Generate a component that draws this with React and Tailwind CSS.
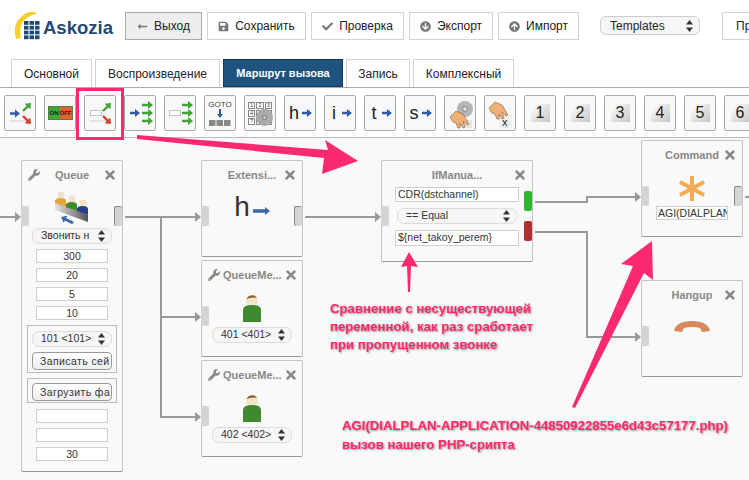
import { FaLongArrowAltLeft, FaSave, FaCheck, FaArrowCircleDown, FaArrowCircleUp, FaWrench, FaTimes } from "react-icons/fa";

const headerButtons = [
  { label: "Выход", icon: FaLongArrowAltLeft, w: "w-[77px]", active: true },
  { label: "Сохранить", icon: FaSave, w: "w-[99px]" },
  { label: "Проверка", icon: FaCheck, w: "w-[93px]" },
  { label: "Экспорт", icon: FaArrowCircleDown, w: "w-[84px]" },
  { label: "Импорт", icon: FaArrowCircleUp, w: "w-[81px]" },
];

const tabs = [
  { label: "Основной", w: "w-[81px]" },
  { label: "Воспроизведение", w: "w-[125px]" },
  { label: "Маршрут вызова", w: "w-[120px]", active: true },
  { label: "Запись", w: "w-[64px]" },
  { label: "Комплексный", w: "w-[101px]" },
];

const BLUE = "#2f5aa0";
const GREEN = "#3fa535";
const RED = "#d0402c";

function Arr({ x1, y1, x2, y2, color = BLUE, t = 2.4, head = 4 }) {
  const len = Math.hypot(x2 - x1, y2 - y1);
  const deg = (Math.atan2(y2 - y1, x2 - x1) * 180) / Math.PI;
  const b = len - head - 1;
  return (
    <polygon
      transform={`translate(${x1} ${y1}) rotate(${deg})`}
      points={`0,${-t / 2} ${b},${-t / 2} ${b},${-head} ${len},0 ${b},${head} ${b},${t / 2} 0,${t / 2}`}
      fill={color}
    />
  );
}

function Sort({ color = "#333" }) {
  return (
    <svg width="7" height="12" viewBox="0 0 7 12" className="shrink-0">
      <polygon points="3.5,0 7,4.5 0,4.5" fill={color} />
      <polygon points="3.5,12 7,7.5 0,7.5" fill={color} />
    </svg>
  );
}

function ToolIcon({ children }) {
  return (
    <svg width="30" height="34" viewBox="0 0 30 34" className="block">
      {children}
    </svg>
  );
}

const Smear = () => <rect x="5" y="24" width="16" height="2" fill="#e4e4e4" />;

function SplitIcon({ box }) {
  return (
    <ToolIcon>
      <Smear />
      {box ? (
        <rect x="5.5" y="14.5" width="11" height="5" fill="#fff" stroke="#c4c4c4" />
      ) : (
        <Arr x1={5} y1={17.5} x2={15} y2={17.5} />
      )}
      <Arr x1={18} y1={15} x2={26} y2={7} color={GREEN} />
      <Arr x1={18} y1={20} x2={26} y2={28} color={RED} />
    </ToolIcon>
  );
}

function TripleIcon({ box }) {
  return (
    <ToolIcon>
      {box ? (
        <rect x="4.5" y="14.5" width="11" height="5" fill="#fff" stroke="#c4c4c4" />
      ) : (
        <Arr x1={5} y1={17} x2={15} y2={17} />
      )}
      <Arr x1={17} y1={9} x2={28} y2={9} color={GREEN} />
      <Arr x1={17} y1={17} x2={28} y2={17} color={GREEN} />
      <Arr x1={17} y1={25} x2={28} y2={25} color={GREEN} />
    </ToolIcon>
  );
}

function OnOffIcon() {
  return (
    <div className="flex h-[14px] w-[25px] border border-[#5a7a50] text-[6px] leading-[12px] font-bold text-[#222]">
      <span className="flex-1 bg-[#3fa535] text-center">ON</span>
      <span className="flex-1 bg-[#e8622c] text-center">OFF</span>
    </div>
  );
}

function GotoIcon() {
  return (
    <div className="flex flex-col items-center">
      <span className="text-[8px] leading-[9px] text-[#444]">GOTO</span>
      <svg width="22" height="18" viewBox="0 0 22 18">
        <Arr x1={11} y1={0} x2={11} y2={9} t={2} head={3} />
        <rect x="0" y="11" width="6.5" height="6" fill="#888" />
        <rect x="7.5" y="11" width="6.5" height="6" fill="#888" />
        <rect x="15" y="11" width="6.5" height="6" fill="#888" />
      </svg>
    </div>
  );
}

function KeypadIcon() {
  return (
    <div className="relative grid w-[24px] grid-cols-3 gap-[1px]">
      {["1", "2", "3", "4", "5", "6", "7", "8", "9"].map((n) => (
        <span key={n} className="h-[7px] border border-[#888] bg-white text-center text-[5px] leading-[5px] text-[#333]">
          {n}
        </span>
      ))}
      <span className="absolute top-[7px] left-[8px] flex h-[17px] w-[17px] items-center justify-center rounded-full bg-[#aaa]">
        <span className="h-[5px] w-[5px] rounded-full border border-[#777] bg-[#ccc]" />
      </span>
    </div>
  );
}

function LetterIcon({ letter }) {
  return (
    <div className="flex w-full items-center pl-[3px]">
      <span className="w-[12px] text-center text-[18px] leading-none font-light text-[#222]">{letter}</span>
      <svg width="10" height="8" viewBox="0 0 10 8" className="ml-[2px]">
        <Arr x1={0} y1={4} x2={10} y2={4} t={2.4} head={4} />
      </svg>
    </div>
  );
}

const handPath = "M0 6 L6 0 L13 3 L19 13 L17 14 L13 10 L15 16 L13 17 L10 12 L10 17 L8 17 L6 12 L3 11 Z";

function HandIcon({ disc }) {
  return (
    <ToolIcon>
      {disc ? (
        <>
          <circle cx="20" cy="13" r="8" fill="#b5b5b5" />
          <circle cx="20" cy="13" r="2.5" fill="#ddd" stroke="#888" />
          <rect x="20" y="24" width="7" height="8" fill="#e4e4e4" />
          <g transform="translate(5 15)">
            <path d={handPath} fill="#f0b078" stroke="#7a5a40" strokeWidth="0.6" />
          </g>
        </>
      ) : (
        <>
          <rect x="14" y="19" width="13" height="13" fill="#eee" />
          <g transform="translate(4 6)">
            <path d={handPath} fill="#f0b078" stroke="#7a5a40" strokeWidth="0.6" />
          </g>
          <text x="17" y="30" fontSize="11" fill="#222">
            x
          </text>
        </>
      )}
    </ToolIcon>
  );
}

function NumberIcon({ n }) {
  return (
    <div className="h-[18px] w-[19px] bg-gradient-to-br from-white to-[#c8c8c8] text-center text-[16px] leading-[18px] text-[#222]">
      {n}
    </div>
  );
}

const toolItems = [
  <SplitIcon />,
  <OnOffIcon />,
  <SplitIcon box />,
  <TripleIcon />,
  <TripleIcon box />,
  <GotoIcon />,
  <KeypadIcon />,
  <LetterIcon letter="h" />,
  <LetterIcon letter="i" />,
  <LetterIcon letter="t" />,
  <LetterIcon letter="s" />,
  <HandIcon disc />,
  <HandIcon />,
  <NumberIcon n="1" />,
  <NumberIcon n="2" />,
  <NumberIcon n="3" />,
  <NumberIcon n="4" />,
  <NumberIcon n="5" />,
  <NumberIcon n="6" />,
];

function Field({ value, left, w = "w-[72px]", h = "h-[14px]" }) {
  return (
    <div className={`${w} ${h} overflow-hidden border border-[#cfcfcf] bg-white px-[1px] text-[10.5px] leading-[12px] whitespace-nowrap text-[#333] ${left ? "text-left" : "text-center"}`}>
      {value}
    </div>
  );
}

function Pick({ label, w = "w-[80px]" }) {
  return (
    <div className={`${w} flex h-[16px] shrink-0 items-center justify-between rounded-[7px] border border-[#dcdcdc] bg-[#f6f6f6] pr-[6px] pl-[8px] text-[10.5px] whitespace-nowrap text-[#333]`}>
      <span className="overflow-hidden">{label}</span>
      <Sort />
    </div>
  );
}

function FileBtn({ label }) {
  return (
    <div className="h-[18px] w-[80px] overflow-hidden rounded-[4px] border border-[#999] bg-gradient-to-b from-white to-[#eee] pl-[7px] text-[10.5px] leading-[16px] tracking-[0.4px] whitespace-nowrap text-[#333]">
      {label}
    </div>
  );
}

function Port({ className }) {
  return <div className={`absolute h-[20px] w-[8px] rounded-[2px] bg-[#d4d4d4] ${className}`} />;
}

function Node({ title, wrench, className, children }) {
  return (
    <div className={`absolute flex flex-col items-center rounded-[2px] border border-[#c4c4c4] border-b-[#999] bg-[#f9f9f9] ${className}`}>
      <div className="flex h-[28px] w-full shrink-0 items-center gap-[2px] px-[5px] text-[#888]">
        <span className="flex w-[14px] shrink-0 justify-center">{wrench && <FaWrench size={12} />}</span>
        <span className="flex-1 text-center text-[11px] font-bold whitespace-nowrap">{title}</span>
        <FaTimes size={14} className="shrink-0" />
      </div>
      {children}
    </div>
  );
}

function Person({ top }) {
  return (
    <svg width="20" height="28" viewBox="0 0 20 28" className={top}>
      <circle cx="10" cy="6" r="6" fill="#f3e3c6" />
      <path d="M4.5 4 A6 6 0 0 1 15 3 Q10 1.5 4.5 4 Z" fill="#8a5a35" />
      <path d="M1 27 V15 Q1 10 10 10 Q19 10 19 15 V27 Z" fill="#3f8a2e" />
    </svg>
  );
}

function QueueIcon() {
  return (
    <svg width="36" height="34" viewBox="0 0 36 34" className="mt-[2px] mb-[3px]">
      <defs>
        <linearGradient id="queueBar" x1="0" x2="1" y1="0" y2="0">
          <stop offset="0" stopColor="#e4e4e4" />
          <stop offset="1" stopColor="#555" />
        </linearGradient>
      </defs>
      <circle cx="7" cy="4" r="3.5" fill="#f3e3c6" />
      <path d="M1 13 V10 Q1 7 7 7 Q12 7 12 10 V16 Z" fill="#e0a83a" />
      <circle cx="18" cy="8" r="3.5" fill="#f3e3c6" />
      <path d="M12 17 V14 Q12 11 18 11 Q23 11 23 14 V20 Z" fill="#3f8a2e" />
      <circle cx="29" cy="12" r="3.5" fill="#f3e3c6" />
      <path d="M23 21 V18 Q23 15 29 15 Q34 15 34 18 V24 Z" fill="#2a3f8a" />
      <polygon points="1,12 34,24 34,31 1,19" fill="url(#queueBar)" />
      <Arr x1={19} y1={32} x2={7} y2={26} t={3} head={4} color="#3f68a8" />
    </svg>
  );
}

function Canvas() {
  return (
    <div className="relative flex-1 bg-[#f9f9f9]">
      {/* wires, page y minus 138 */}
      <svg width="749" height="342" className="absolute top-0 left-0" fill="none" stroke="#999" strokeWidth="2">
        <path d="M0 79H16" />
        <path d="M125 79H196M161 79V279H196M161 179H196" />
        <path d="M305 79H376" />
        <path d="M535 64H587V59H636" />
        <path d="M535 94H587V199H636" />
        <path d="M745 59H749" />
        <g fill="#999" stroke="none">
          <polygon points="15,74 21,79 15,84" />
          <polygon points="195,74 201,79 195,84" />
          <polygon points="195,174 201,179 195,184" />
          <polygon points="195,274 201,279 195,284" />
          <polygon points="375,74 381,79 375,84" />
          <polygon points="635,54 641,59 635,64" />
          <polygon points="635,194 641,199 635,204" />
        </g>
      </svg>

      <Node title="Queue" wrench className="top-[22px] left-[21px] h-[312px] w-[102px]">
        <Port className="top-[45px] -left-px" />
        <Port className="top-[45px] right-0 border-t border-l border-[#888]" />
        <QueueIcon />
        <Pick label="Звонить н" />
        <div className="mt-[5px] flex flex-col gap-[5px]">
          <Field value="300" />
          <Field value="20" />
          <Field value="5" />
          <Field value="10" />
        </div>
        <div className="mt-[5px] flex h-[48px] w-[90px] flex-col items-center gap-[5px] border border-[#bbb] pt-[5px]">
          <Pick label="101 <101>" />
          <FileBtn label="Записать сей" />
        </div>
        <div className="mt-[5px] flex h-[25px] w-[90px] flex-col items-center border border-[#bbb] pt-[4px]">
          <FileBtn label="Загрузить фа" />
        </div>
        <div className="mt-[6px] flex flex-col gap-[5px]">
          <Field value="" />
          <Field value="" />
          <Field value="30" />
        </div>
      </Node>

      <Node title="Extensi..." className="top-[22px] left-[201px] h-[97px] w-[102px]">
        <Port className="top-[45px] -left-px" />
        <Port className="top-[45px] right-0 border-t border-l border-[#888]" />
        <div className="mt-[3px] flex items-center gap-[3px]">
          <span className="text-[28px] leading-[30px] font-light text-[#333]">h</span>
          <svg width="17" height="8" viewBox="0 0 17 8" className="mt-[8px]">
            <Arr x1={0} y1={4} x2={17} y2={4} t={3.5} head={4} color="#3f68a8" />
          </svg>
        </div>
      </Node>

      <Node title="QueueMe..." wrench className="top-[122px] left-[201px] h-[97px] w-[102px]">
        <Port className="top-[45px] -left-px" />
        <Person top="mt-[6px] mb-[4px]" />
        <Pick label="401 <401>" />
      </Node>

      <Node title="QueueMe..." wrench className="top-[222px] left-[201px] h-[97px] w-[102px]">
        <Port className="top-[45px] -left-px" />
        <Person top="mt-[6px] mb-[4px]" />
        <Pick label="402 <402>" />
      </Node>

      <Node title="IfManua..." className="top-[22px] left-[381px] h-[102px] w-[152px]">
        <Port className="top-[30px] -left-px !top-[45px]" />
        <Port className="top-[30px] right-0 !bg-[#2fb52f]" />
        <Port className="top-[60px] right-0 !bg-[#b02f2f]" />
        <div className="-mt-[2px] flex flex-col items-center">
          <Field value="CDR(dstchannel)" left w="w-[124px] pl-[2px]" h="h-[15px]" />
          <div className="my-[6px]">
            <Pick label="== Equal" w="w-[120px]" />
          </div>
          <Field value="${net_takoy_perem}" left w="w-[124px] pl-[2px]" h="h-[16px]" />
        </div>
      </Node>

      <Node title="Command" className="top-[2px] left-[641px] h-[97px] w-[102px]">
        <Port className="top-[45px] -left-px" />
        <Port className="top-[45px] right-0 border-t border-l border-[#888]" />
        <svg width="28" height="27" viewBox="0 0 28 27" className="mt-[6px]" stroke="#f0ab55" strokeWidth="4">
          <path d="M14 1V26M2 7L26 20M26 7L2 20" />
        </svg>
        <div className="mt-[4px]">
          <Field value="AGI(DIALPLAN-APPLICATION" left />
        </div>
      </Node>

      <Node title="Hangup" className="top-[142px] left-[641px] h-[97px] w-[102px]">
        <Port className="top-[45px] -left-px" />
        <svg width="38" height="15" viewBox="0 0 38 15" className="mt-[10px]">
          <path d="M1 12 Q3 2 19 2 Q35 2 37 12 L29 13 L27 9 Q19 7 11 9 L9 13 Z" fill="#d68a5c" />
        </svg>
      </Node>
    </div>
  );
}

export default function App() {
  return (
    <div className="relative flex h-[480px] w-[749px] flex-col overflow-hidden bg-white font-['Liberation_Sans',Arial,sans-serif] text-[12px] text-[#222]">
      {/* top bar */}
      <div className="flex h-[59px] shrink-0 items-start pt-3 pl-3">
        <div className="flex w-[113px] shrink-0 items-center pt-[3px]">
          <svg width="31" height="30" viewBox="0 0 31 30" className="-mt-[3px] shrink-0">
            <path d="M4 27 Q0 12 10 4 Q15 0 22 -2 L24 2 Q15 4 10 11 Q7 18 9 26 Z" fill="#f5cf2c" />
            <g fill="#1f4a73">
              {[0, 1, 2, 3].map((r) =>
                [0, 1, 2].map((c) => <rect key={`${r}${c}`} x={12 + c * 5.5} y={9 + r * 4.8} width="4.5" height="3.8" />)
              )}
            </g>
          </svg>
          <span className="text-[18.5px] leading-none font-bold text-[#1f4a73]">Askozia</span>
        </div>
        <div className="flex gap-[5px]">
          {headerButtons.map(({ label, icon: Icon, w, active }) => (
            <div key={label} className={`${w} flex h-[28px] shrink-0 items-center justify-center gap-[6px] border ${active ? "border-[#aaa] bg-[#eee]" : "border-[#d4d4d4] bg-white"}`}>
              <Icon size={11} className="text-[#777]" />
              <span>{label}</span>
            </div>
          ))}
        </div>
        <div className="mt-1 ml-[21px] flex h-[19px] w-[100px] shrink-0 items-center justify-between rounded-[6px] border border-[#ccc] bg-[#f6f6f6] pr-[6px] pl-[9px]">
          <span>Templates</span>
          <Sort />
        </div>
        <div className="ml-[22px] flex h-[28px] w-[80px] shrink-0 items-center border border-[#d4d4d4] pl-[13px]">Пр</div>
      </div>

      {/* tabs */}
      <div className="flex h-[29px] shrink-0 gap-[3px] border-b border-[#aaa] pl-[11px]">
        {tabs.map(({ label, w, active }) => (
          <div key={label} className={`${w} flex h-[28px] items-center justify-center border ${active ? "border-[#15395a] bg-[#1f5480] text-[11px] font-bold text-white" : "border-[#d4d4d4] border-b-0 bg-white"}`}>
            {label}
          </div>
        ))}
      </div>

      {/* toolbar */}
      <div className="flex h-[50px] shrink-0 gap-2 overflow-hidden border-b border-[#bbb] pt-[7px] pl-1">
        {toolItems.map((item, i) => (
          <div key={i} className="flex h-[36px] w-[32px] shrink-0 items-center justify-center rounded-[2px] border border-[#aaa] bg-[#f8f8f8]">
            {item}
          </div>
        ))}
      </div>

      <Canvas />

      {/* annotations */}
      <div className="absolute top-[88px] left-[76px] h-[52px] w-[48px] border-[3px] border-[#fb2a6e]" />
      <svg width="749" height="480" className="absolute top-0 left-0" fill="#fb2a6e">
        <polygon points="137,135 328,150 325,140 358,161 322,174 324,158 137,139" />
        <polygon points="409,252 418,267 411,266 410,292 408,292 407,266 401,267" />
        <polygon points="652,241 653,280 644,273 575,408 572,407 633,266 621,264" />
      </svg>
      <div className="absolute top-[300px] left-[330px] text-[13.2px] leading-[18px] font-bold whitespace-nowrap text-[#fb2a6e] [text-shadow:1px_1px_2px_rgba(0,0,0,0.4)]">
        Сравнение с несуществующей
        <br />
        переменной, как раз сработает
        <br />
        при пропущенном звонке
      </div>
      <div className="absolute top-[417px] left-[342px] text-[13.2px] leading-[18.5px] font-bold whitespace-nowrap text-[#fb2a6e] [text-shadow:1px_1px_2px_rgba(0,0,0,0.4)]">
        AGI(DIALPLAN-APPLICATION-44850922855e6d43c57177.php)
        <br />
        вызов нашего PHP-срипта
      </div>
    </div>
  );
}
